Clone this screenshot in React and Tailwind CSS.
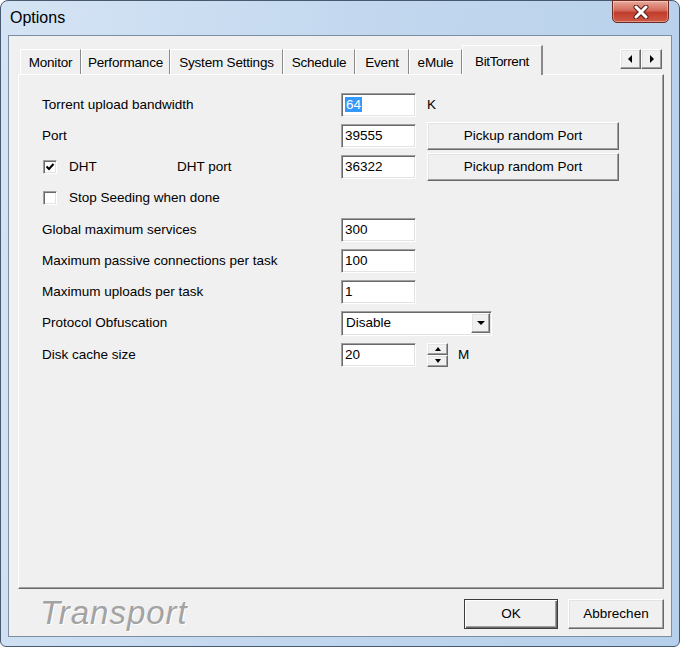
import React from 'react';

const sunken =
  'border border-t-[#a0a0a0] border-l-[#a0a0a0] border-b-white border-r-white shadow-[inset_1px_1px_0_#696969,inset_-1px_-1px_0_#e3e3e3]';
const raised =
  'border border-t-white border-l-white border-b-[#696969] border-r-[#696969] shadow-[inset_-1px_-1px_0_#a0a0a0,inset_1px_1px_0_#e3e3e3] bg-[#f0f0f0]';

const tabs = [
  { label: 'Monitor', w: 61 },
  { label: 'Performance', w: 89 },
  { label: 'System Settings', w: 113 },
  { label: 'Schedule', w: 72 },
  { label: 'Event', w: 54 },
  { label: 'eMule', w: 53 },
];

const Field = ({ value, selected, className = 'w-[75px]' }) => (
  <div className={`${sunken} ${className} h-[24px] bg-white flex items-center pl-[3px]`}>
    {selected ? (
      <span className="bg-[#3399ff] text-white leading-[15px] px-[1px]">{value}</span>
    ) : (
      <span>{value}</span>
    )}
  </div>
);

const PickButton = () => (
  <button className={`${raised} ml-[11px] w-[192px] h-[28px] flex items-center justify-center`}>
    Pickup random Port
  </button>
);

const Check = ({ checked }) => (
  <div className={`${sunken} w-[14px] h-[14px] bg-white flex items-center justify-center`}>
    {checked && (
      <svg width="10" height="10" viewBox="0 0 10 10">
        <path d="M1.5 4.5 L4 7 L8.5 2" stroke="#000" strokeWidth="2" fill="none" />
      </svg>
    )}
  </div>
);

const Row = ({ label, children }) => (
  <div className="flex items-center h-[31.25px]">
    <div className="w-[299px]">{label}</div>
    {children}
  </div>
);

const Tri = ({ dir }) => {
  const d = {
    left: 'M6 1 L6 9 L2 5 Z',
    right: 'M3 1 L3 9 L7 5 Z',
    down: 'M1 3 L9 3 L5 7 Z',
    up: 'M2 6 L8 6 L5 3 Z',
  }[dir];
  return (
    <svg width="10" height="10" viewBox="0 0 10 10">
      <path d={d} fill="#000" />
    </svg>
  );
};

export default function App() {
  return (
    <div
      className="w-[680px] h-[647px] bg-white text-black"
      style={{ fontFamily: '"Liberation Sans", Arial, sans-serif' }}
    >
      <div className="relative w-[680px] h-[647px] rounded-t-[8px] rounded-b-[6px] border border-[#47596f] bg-[linear-gradient(100deg,#d5e4f4_0%,#c3d8ef_45%,#b6cfea_100%)] flex flex-col">
        {/* title bar */}
        <div className="h-[34px] flex items-center pl-[9px] text-[16px] text-black">Options</div>
        <div className="absolute top-[-1px] right-[10px] w-[57px] h-[23px] rounded-b-[5px] border border-[#6d2b22] bg-[linear-gradient(#e9a99b_0%,#d46a5a_45%,#c03c2c_55%,#cf5a45_100%)] flex items-center justify-center shadow-[inset_0_0_0_1px_rgba(255,255,255,0.35)]">
          <svg width="18" height="14" viewBox="0 0 18 14">
            <path d="M4 2 L14 12 M14 2 L4 12" stroke="#5a1d16" strokeWidth="5" strokeLinecap="round" />
            <path d="M4 2 L14 12 M14 2 L4 12" stroke="#fff" strokeWidth="3" strokeLinecap="round" />
          </svg>
        </div>

        {/* client area */}
        <div className="mx-[7px] h-[602px] border border-[#7d8ea3] bg-[#f0f0f0] flex flex-col text-[13.5px]">
          <div className="pt-[9px] pl-[9px] pr-[7px]">
            {/* tab strip */}
            <div className="flex items-end h-[29px] pl-[2px]">
              {tabs.map((t) => (
                <div
                  key={t.label}
                  style={{ width: t.w }}
                  className="h-[25px] border-t border-l border-t-white border-l-white border-r border-r-[#8a8a8a] flex items-center justify-center pt-[2px] tracking-[-0.2px]"
                >
                  {t.label}
                </div>
              ))}
              <div className="relative z-10 w-[81px] h-[30px] mb-[-1px] bg-[#f0f0f0] border-t border-l border-t-white border-l-white border-r-2 border-r-[#8a8a8a] flex items-start justify-center pt-[6px] tracking-[-0.4px]">
                BitTorrent
              </div>
              <div className="ml-auto mr-[2px] self-start mt-[4px] flex">
                <div className={`${raised} w-[21px] h-[20px] flex items-center justify-center`}>
                  <Tri dir="left" />
                </div>
                <div className={`${raised} w-[21px] h-[20px] flex items-center justify-center`}>
                  <Tri dir="right" />
                </div>
              </div>
            </div>

            {/* tab panel */}
            <div className="h-[515px] border border-t-white border-l-white border-b-[#696969] border-r-[#696969] shadow-[inset_-1px_-1px_0_#a0a0a0] pl-[23px] pt-[14px]">
              <Row label="Torrent upload bandwidth">
                <Field value="64" selected />
                <span className="ml-[11px]">K</span>
              </Row>
              <Row label="Port">
                <Field value="39555" />
                <PickButton />
              </Row>
              <div className="flex items-center h-[31.25px]">
                <div className="w-[299px] flex items-center pl-[1px]">
                  <Check checked />
                  <span className="ml-[12px] w-[108px]">DHT</span>
                  <span>DHT port</span>
                </div>
                <Field value="36322" />
                <PickButton />
              </div>
              <div className="flex items-center h-[31.25px] pl-[1px]">
                <Check />
                <span className="ml-[12px]">Stop Seeding when done</span>
              </div>
              <Row label="Global maximum services">
                <Field value="300" />
              </Row>
              <Row label="Maximum passive connections per task">
                <Field value="100" />
              </Row>
              <Row label="Maximum uploads per task">
                <Field value="1" />
              </Row>
              <Row label="Protocol Obfuscation">
                <div className={`${sunken} w-[151px] h-[25px] bg-white flex items-center pl-[4px] pr-[1px]`}>
                  <span className="flex-1">Disable</span>
                  <div className={`${raised} w-[19px] h-[20px] flex items-center justify-center`}>
                    <Tri dir="down" />
                  </div>
                </div>
              </Row>
              <Row label="Disk cache size">
                <Field value="20" />
                <div className="ml-[11px] flex flex-col">
                  <div className={`${raised} w-[21px] h-[12px] flex items-center justify-center`}>
                    <svg width="6" height="4" viewBox="0 0 6 4">
                      <path d="M0 4 L6 4 L3 0 Z" fill="#000" />
                    </svg>
                  </div>
                  <div className={`${raised} w-[21px] h-[12px] flex items-center justify-center`}>
                    <svg width="6" height="4" viewBox="0 0 6 4">
                      <path d="M0 0 L6 0 L3 4 Z" fill="#000" />
                    </svg>
                  </div>
                </div>
                <span className="ml-[10px]">M</span>
              </Row>
            </div>
          </div>

          {/* bottom bar */}
          <div className="flex items-start pt-[7px] pl-[31px] pr-[7px]">
            <div className="text-[33px] italic tracking-[1px] leading-[34px] text-[#a3a3a3] [text-shadow:1px_1px_0_#ffffff]">
              Transport
            </div>
            <button className="ml-auto mt-[3px] w-[94px] h-[30px] border border-[#3c3c3c] bg-[#f0f0f0] shadow-[inset_1px_1px_0_#ffffff,inset_-1px_-1px_0_#696969,inset_-2px_-2px_0_#a0a0a0] flex items-center justify-center">
              OK
            </button>
            <button className={`${raised} mt-[3px] ml-[10px] w-[96px] h-[30px] flex items-center justify-center`}>
              Abbrechen
            </button>
          </div>
        </div>
      </div>
    </div>
  );
}
